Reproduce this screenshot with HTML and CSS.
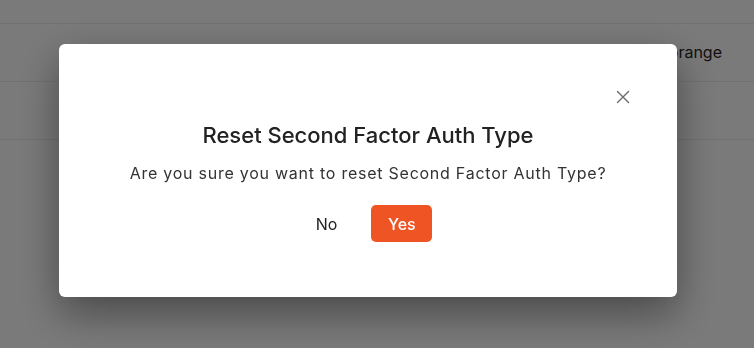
FILE: index.html
```html
<!DOCTYPE html>
<html lang="en">
<head>
    <meta charset="UTF-8">
    <meta name="viewport" content="width=device-width, initial-scale=1.0">
    <title>Reset Second Factor Auth Type</title>
    <link rel="stylesheet" href="styles.css">
</head>
<body>

    <div class="page">
        <div class="row"></div>
        <div class="row row-tall"><span class="cell-value">orange</span></div>
        <div class="row row-tall"></div>
    </div>

    <div class="overlay">
        <div class="modal">
            <div class="modal-head">
                <button class="close" aria-label="Close">
                    <svg width="14" height="14" viewBox="0 0 14 14">
                        <path d="M1.5 1.5 L12.5 12.5 M12.5 1.5 L1.5 12.5" stroke="#6b6b6b" stroke-width="1.4" fill="none" stroke-linecap="round"/>
                    </svg>
                </button>
            </div>
            <h2 class="modal-title">Reset Second Factor Auth Type</h2>
            <p class="modal-text">Are you sure you want to reset Second Factor Auth Type?</p>
            <div class="actions">
                <button class="btn btn-no">No</button>
                <button class="btn btn-yes">Yes</button>
            </div>
        </div>
    </div>

</body>
</html>
```

FILE: styles.css
```css
body {
    margin: 0;
    font-family: "Inter", "Noto Sans", sans-serif;
    background: #f4f4f4;
    color: #222222;
}

.page {
    height: 348px;
}

.row {
    height: 23px;
    border-bottom: 1px solid #e2e2e2;
}

.row-tall {
    display: flex;
    align-items: center;
    justify-content: flex-end;
    padding-right: 32px;
    box-sizing: border-box;
    height: 58px;
}

.cell-value {
    font-size: 16px;
    color: #222222;
    margin-top: -2px;
}

.overlay {
    position: fixed;
    inset: 0;
    background: rgba(0, 0, 0, .5);
    padding: 44px 0 0 59px;
}

.modal {
    width: 618px;
    height: 253px;
    box-sizing: border-box;
    background: #ffffff;
    border-radius: 6px;
    box-shadow: 0px 16px 40px rgba(0, 0, 0, .4);
    padding-top: 43px;
    text-align: center;
}

.modal-head {
    display: flex;
    justify-content: flex-end;
    padding-right: 44px;
    height: 20px;
}

.close {
    width: 20px;
    height: 20px;
    padding: 0;
    border: none;
    background: none;
    display: flex;
    align-items: center;
    justify-content: center;
}

.modal-title {
    margin: 13px 0 0;
    font-size: 22px;
    font-weight: 500;
    line-height: 30px;
    color: #222222;
}

.modal-text {
    margin: 12px 0 0;
    font-size: 16px;
    line-height: 22px;
    color: #333333;
    letter-spacing: .75px;
}

.actions {
    display: flex;
    justify-content: center;
    gap: 22px;
    margin-top: 21px;
}

.btn {
    font-family: inherit;
    font-size: 16px;
    border: none;
    border-radius: 5px;
    height: 37px;
    cursor: pointer;
}

.btn-no {
    background: none;
    color: #222222;
    font-weight: 400;
    padding: 0 12px;
}

.btn-yes {
    background: #ee5424;
    color: #ffffff;
    font-weight: 500;
    width: 61px;
}
```
